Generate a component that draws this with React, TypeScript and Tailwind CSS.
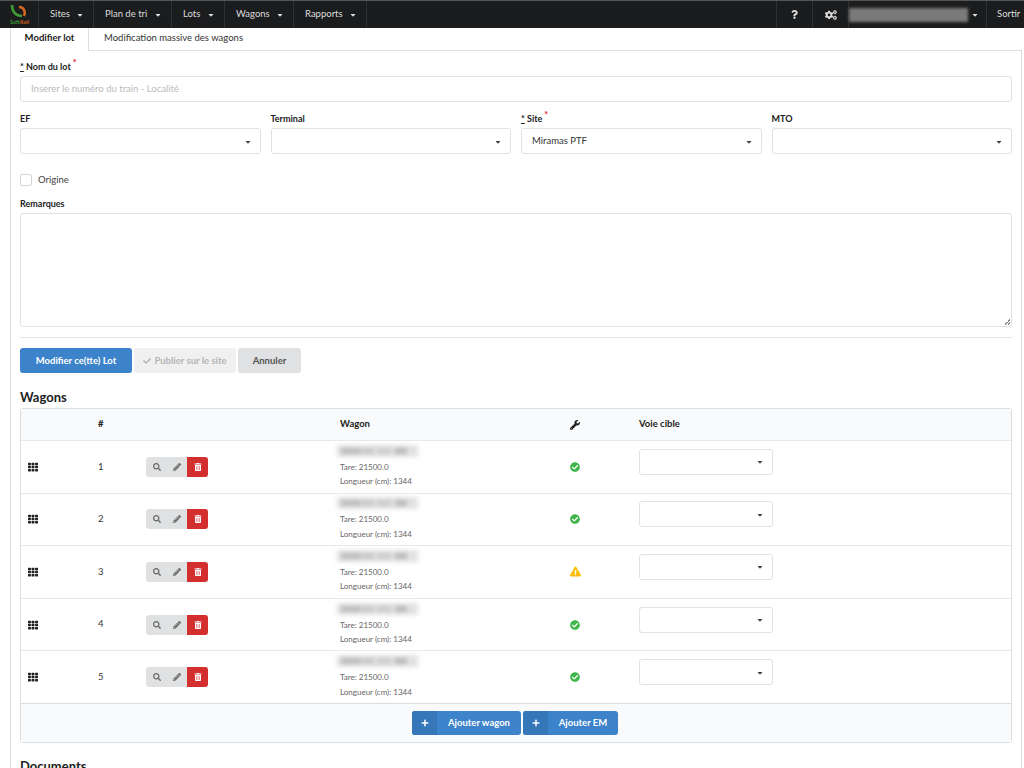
import {
  FaCaretDown,
  FaCheck,
  FaCheckCircle,
  FaCogs,
  FaExclamationTriangle,
  FaPencilAlt,
  FaPlus,
  FaQuestion,
  FaSearch,
  FaTh,
  FaTrashAlt,
  FaWrench,
} from "react-icons/fa";

const navItems = [
  { label: "Sites", width: "w-[55px]" },
  { label: "Plan de tri", width: "w-[78px]" },
  { label: "Lots", width: "w-[53px]" },
  { label: "Wagons", width: "w-[69px]" },
  { label: "Rapports", width: "w-[73px]" },
];

const wagons = [
  { id: 1, ok: true },
  { id: 2, ok: true },
  { id: 3, ok: false },
  { id: 4, ok: true },
  { id: 5, ok: true },
];

const Logo = () => (
  <svg width="24" height="24" viewBox="0 0 24 24">
    <path d="M4 2c0 7 4 11 10 11" fill="none" stroke="#3f9a35" strokeWidth="2.6" />
    <path d="M11 4c5 0 7 5 5 9" fill="none" stroke="#d9671f" strokeWidth="2.6" />
    <text x="2" y="21" fontSize="5.5" fontWeight="700" fill="#3f9a35">
      Soft
      <tspan fill="#c9601c">Rail</tspan>
    </text>
  </svg>
);

const SelectBox = ({ value, className }: { value?: string; className: string }) => (
  <div
    className={`flex h-[26px] items-center justify-between rounded-[3px] border border-[#e1e2e3] bg-white pl-[10px] pr-[8px] pt-[1px] text-[9.5px] text-[#333] ${className}`}
  >
    <span>{value}</span>
    <FaCaretDown className="text-[8px] text-[#444]" />
  </div>
);

const FieldLabel = ({ text, required }: { text: string; required?: boolean }) => (
  <div className="mb-[4px] h-[11px] text-[9px] font-bold leading-[11px] text-[#222]">
    {required && <span className="underline">*</span>}
    {required && " "}
    {text}
    {required && <sup className="ml-[2px] text-[9px] leading-none text-[#db2828]">*</sup>}
  </div>
);

const BlurredId = ({ className }: { className: string }) => (
  <div className={`flex items-center gap-[1px] bg-[#e2e2e2] blur-[2px] ${className}`}>
    <div className="ml-[4px] h-[6px] w-[20px] bg-[#bdbdbd]" />
    <div className="h-[6px] w-[12px] bg-[#c8c8c8]" />
    <div className="ml-[2px] h-[6px] w-[14px] bg-[#cdcdcd]" />
    <div className="ml-[3px] h-[6px] w-[12px] bg-[#bababa]" />
  </div>
);

const WagonRow = ({ id, ok }: { id: number; ok: boolean }) => (
  <div className="flex h-[52.6px] items-center border-t border-[#e8e9ea] text-[9.5px] text-[#333]">
    <div className="w-[71px] pl-[7px]">
      <FaTh className="text-[10px] text-[#222]" />
    </div>
    <div className="w-[54px] pl-[6px] text-[9.5px]">{id}</div>
    <div className="w-[194px]">
      <div className="flex h-[20px] w-[62px] overflow-hidden rounded-[3px] bg-[#e0e1e2] text-[#666]">
        <div className="flex w-[21px] items-center justify-center">
          <FaSearch className="text-[8px]" />
        </div>
        <div className="flex w-[20px] items-center justify-center">
          <FaPencilAlt className="text-[8px]" />
        </div>
        <div className="flex w-[21px] items-center justify-center bg-[#d32f2f] text-white">
          <FaTrashAlt className="text-[8px]" />
        </div>
      </div>
    </div>
    <div className="w-[225px]">
      <BlurredId className="-ml-[3px] mb-[3px] h-[12px] w-[81px]" />
      <div className="text-[8px] leading-[14.5px] text-[#666]">Tare: 21500.0</div>
      <div className="text-[8px] leading-[14.5px] text-[#666]">Longueur (cm): 1344</div>
    </div>
    <div className="flex w-[74px] pl-[5px]">
      {ok ? (
        <FaCheckCircle className="text-[10px] text-[#3fb54a]" />
      ) : (
        <FaExclamationTriangle className="text-[11px] text-[#fbbd08]" />
      )}
    </div>
    <SelectBox className="mb-[10px] w-[134px]" />
  </div>
);

const App = () => {
  return (
    <div className="h-[768px] overflow-hidden bg-white font-['Lato','Open_Sans',sans-serif] text-[#222]">
      <nav className="flex h-[28px] border-t border-[#555] bg-[#1b1c1d] text-[9.5px] text-[#ddd]">
        <div className="flex w-[39px] items-center justify-center border-r border-[#303132] pl-[2px]">
          <Logo />
        </div>
        {navItems.map((item) => (
          <div
            key={item.label}
            className={`flex items-center justify-between border-r border-[#303132] pl-[11px] pr-[9px] ${item.width}`}
          >
            {item.label}
            <FaCaretDown className="text-[8px]" />
          </div>
        ))}
        <div className="ml-auto flex w-[37px] items-center justify-center border-x border-[#303132]">
          <FaQuestion className="text-[9px] text-[#ddd]" />
        </div>
        <div className="flex w-[36px] items-center justify-center border-r border-[#303132]">
          <FaCogs className="text-[12px]" />
        </div>
        <div className="flex w-[138px] items-center gap-[3px] border-r border-[#303132]">
          <div className="h-[14px] w-[119px] bg-[#7a7a7a] blur-[1.5px]" />
          <FaCaretDown className="text-[8px]" />
        </div>
        <div className="flex w-[37px] items-center pl-[10px]">Sortir</div>
      </nav>

      <div className="ml-[10px] mr-[2px]">
        <div className="relative z-10 flex h-[23px] text-[9.5px]">
          <div className="flex w-[79px] items-center justify-center border-x border-[#dcddde] bg-white pb-[2px] font-bold">
            Modifier lot
          </div>
          <div className="flex items-center pb-[2px] pl-[15px] text-[#333]">
            Modification massive des wagons
          </div>
        </div>
        <div className="-mt-px border-x border-t border-[#dcddde] px-[9px] pt-[10px]">
          <FieldLabel text="Nom du lot" required />
          <div className="flex h-[26px] items-center rounded-[3px] border border-[#e1e2e3] pl-[10px] pt-[1px] text-[9.5px] text-[#bbb]">
            Inserer le numéro du train - Localité
          </div>

          <div className="mt-[11px] grid grid-cols-4 gap-[10px]">
            <div>
              <FieldLabel text="EF" />
              <SelectBox className="" />
            </div>
            <div>
              <FieldLabel text="Terminal" />
              <SelectBox className="" />
            </div>
            <div>
              <FieldLabel text="Site" required />
              <SelectBox value="Miramas PTF" className="" />
            </div>
            <div>
              <FieldLabel text="MTO" />
              <SelectBox className="" />
            </div>
          </div>

          <div className="mt-[19px] flex h-[14px] items-center gap-[6px] text-[9.5px] text-[#444]">
            <div className="h-[12px] w-[12px] rounded-[2px] border border-[#d4d4d5]" />
            Origine
          </div>

          <div className="mt-[11px]">
            <FieldLabel text="Remarques" />
            <div className="relative h-[114px] rounded-[3px] border border-[#e1e2e3]">
              <div className="absolute bottom-[1px] right-[1px] h-[6px] w-[6px] bg-[linear-gradient(135deg,transparent_50%,#888_50%,#888_60%,transparent_60%,transparent_75%,#888_75%,#888_85%,transparent_85%)]" />
            </div>
          </div>

          <div className="mt-[10px] border-t border-[#e3e4e5]" />

          <div className="mt-[10px] flex gap-[2px] text-[9.5px] font-bold">
            <div className="flex h-[25px] w-[112px] items-center justify-center rounded-[3px] bg-[#3c83cb] pt-[1px] text-white">
              Modifier ce(tte) Lot
            </div>
            <div className="flex h-[25px] w-[102px] items-center justify-center gap-[3px] rounded-[3px] bg-[#f0f0f0] pt-[1px] text-[#b5b5b5]">
              <FaCheck className="text-[8px]" />
              Publier sur le site
            </div>
            <div className="flex h-[25px] w-[63px] items-center justify-center rounded-[3px] bg-[#e0e1e2] pt-[1px] text-[#555]">
              Annuler
            </div>
          </div>

          <h2 className="mt-[16px] h-[19px] text-[13px] font-bold leading-[17px] text-[#222]">Wagons</h2>

          <div className="rounded-[3px] border border-[#dcddde]">
            <div className="flex h-[31px] items-center bg-[#f9fafb] text-[9.5px] font-bold text-[#222]">
              <div className="w-[71px]" />
              <div className="w-[248px] pl-[6px]">#</div>
              <div className="w-[229px]">Wagon</div>
              <div className="w-[70px] pl-[1px]">
                <FaWrench className="text-[10px]" />
              </div>
              <div>Voie cible</div>
            </div>
            {wagons.map((wagon) => (
              <WagonRow key={wagon.id} id={wagon.id} ok={wagon.ok} />
            ))}
            <div className="flex h-[39px] items-center justify-center gap-[2px] border-t border-[#dcddde] bg-[#f9fafb] pr-[2px] text-[9.5px] font-bold text-white">
              <div className="flex h-[24px] w-[109px] items-center rounded-[3px] bg-[#3c83cb]">
                <div className="flex h-full w-[25px] items-center justify-center rounded-l-[3px] bg-[#3577b9]">
                  <FaPlus className="text-[8px]" />
                </div>
                <span className="flex-1 text-center">Ajouter wagon</span>
              </div>
              <div className="flex h-[24px] w-[95px] items-center rounded-[3px] bg-[#3c83cb]">
                <div className="flex h-full w-[25px] items-center justify-center rounded-l-[3px] bg-[#3577b9]">
                  <FaPlus className="text-[8px]" />
                </div>
                <span className="flex-1 text-center">Ajouter EM</span>
              </div>
            </div>
          </div>

          <h2 className="mt-[15px] text-[13px] font-bold leading-[17px] text-[#222]">Documents</h2>
        </div>
      </div>
    </div>
  );
};

export default App;
